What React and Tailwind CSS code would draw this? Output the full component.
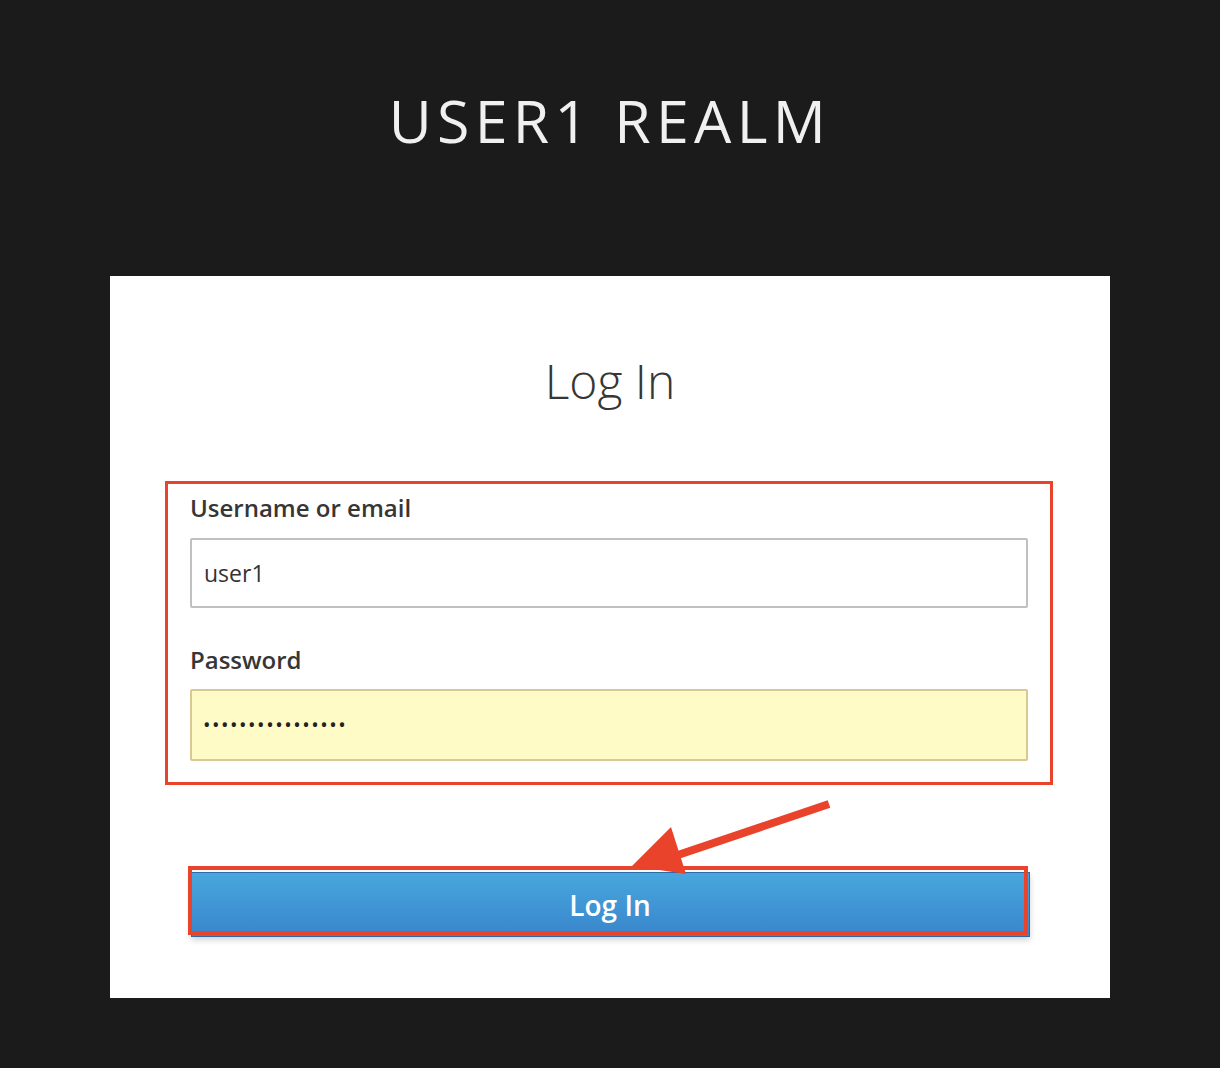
import React from "react";

const Arrow = () => (
  <svg className="absolute left-0 top-0 pointer-events-none" width="1220" height="1068" viewBox="0 0 1220 1068">
    <line x1="829" y1="804" x2="672" y2="857" stroke="#e9432b" strokeWidth="8" />
    <polygon points="632,866 671,827 686,874" fill="#e9432b" />
  </svg>
);

const App = () => {
  return (
    <div className="relative min-h-[1068px] bg-[#1b1b1b] flex flex-col items-center font-['Open_Sans',sans-serif]">
      <h1 className="pt-[91px] text-[59px] leading-none font-normal tracking-[0.09em] text-[#f0f0f0]">USER1 REALM</h1>

      <div className="mt-[126px] w-[1000px] bg-white flex flex-col items-center pt-[81px] pb-[61px]">
        <h2 className="text-[48px] leading-none font-light text-[#363636]">Log In</h2>

        <div className="mt-[76px] mr-[2px] w-[888px] border-[3px] border-[#e9432b] px-[22px] pt-[10px] pb-[21px] flex flex-col">
          <label className="text-[24px] leading-[28px] font-semibold text-[#363636]">Username or email</label>
          <div className="mt-[16px] h-[70px] border-2 border-[#c0c0c0] rounded-[2px] flex items-center px-[12px] text-[23px] text-[#333]">
            user1
          </div>
          <label className="mt-[38px] text-[24px] leading-[28px] font-semibold text-[#363636]">Password</label>
          <div className="mt-[15px] h-[72px] border-2 border-[#d8c892] bg-[#fffbc7] rounded-[2px] flex items-center px-[11px] text-[20px] tracking-[1.5px] text-[#222]">
            ••••••••••••••••
          </div>
        </div>

        <div className="relative mt-[87px] w-[839px]">
          <button className="w-full h-[65px] border border-[#2a6aa8] bg-gradient-to-b from-[#48a6dd] to-[#3986cc] shadow-[0_3px_6px_rgba(0,0,0,0.18)] text-white text-[28px] font-semibold flex items-center justify-center">
            Log In
          </button>
          <div className="absolute left-[-3px] top-[-6px] w-[840px] h-[69px] border-4 border-[#e9432b]" />
        </div>
      </div>

      <Arrow />
    </div>
  );
};

export default App;
